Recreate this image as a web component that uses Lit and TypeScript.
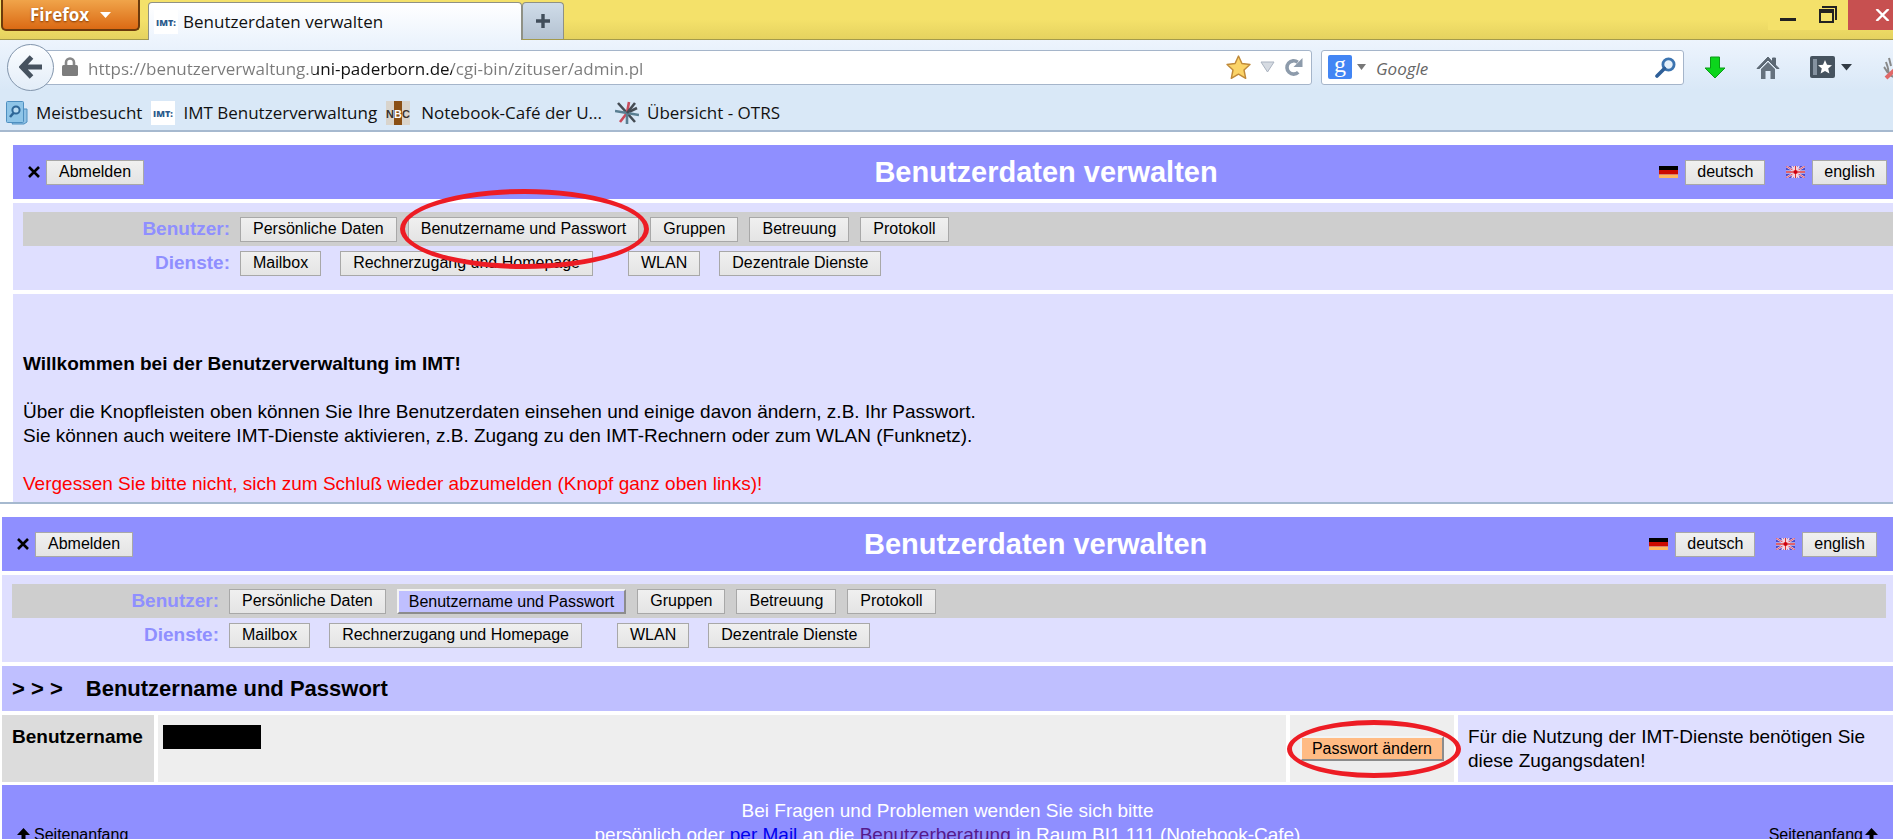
import { LitElement, html, css, svg, nothing } from "lit";
import { customElement, property } from "lit/decorators.js";

interface NavItem {
  label: string;
  gap?: "wide" | "far";
}

const USER_ITEMS: NavItem[] = [
  { label: "Persönliche Daten" },
  { label: "Benutzername und Passwort" },
  { label: "Gruppen" },
  { label: "Betreuung" },
  { label: "Protokoll" },
];

const SERVICE_ITEMS: NavItem[] = [
  { label: "Mailbox" },
  { label: "Rechnerzugang und Homepage", gap: "wide" },
  { label: "WLAN", gap: "far" },
  { label: "Dezentrale Dienste", gap: "wide" },
];

const buttonStyles = css`
  .btn {
    box-sizing: border-box;
    height: 25px;
    margin: 0;
    padding: 0 12px;
    border: 1px solid #a8a8a8;
    border-radius: 0;
    background: linear-gradient(#f0f0f0, #e4e4e4);
    color: #000;
    font: 16px/22px "Liberation Sans", Arial, sans-serif;
    white-space: nowrap;
  }
  .btn.active,
  .btn.action {
    border: 2px solid;
    border-color: #f4f4f4 #8c8c8c #8c8c8c #f4f4f4;
    padding: 0 10px;
    background: #bfbfff;
  }
  .btn.action {
    background: #ffbb84;
  }
  .marked {
    position: relative;
    display: inline-flex;
  }
  .ring {
    position: absolute;
    box-sizing: border-box;
    border: 5px solid #ed1c24;
    border-radius: 50%;
    pointer-events: none;
    z-index: 2;
  }
`;

/* Firefox window frame: title bar, toolbar and bookmarks */
@customElement("browser-chrome")
export class BrowserChrome extends LitElement {
  static styles = css`
    :host {
      display: block;
      font-family: "Open Sans", "Noto Sans", sans-serif;
      font-size: 17px;
      color: #111;
    }
    button {
      margin: 0;
      padding: 0;
      border: 0;
      background: none;
      font: inherit;
      color: inherit;
      display: flex;
      align-items: center;
      justify-content: center;
    }
    svg {
      display: block;
      flex: none;
    }
    .titlebar {
      display: flex;
      height: 39px;
      border-bottom: 1px solid #a39a4c;
      background: linear-gradient(#f4e16a 0 20px, #e5d25f);
    }
    .titlebar .menu {
      box-sizing: border-box;
      width: 139px;
      height: 31px;
      margin: 0 8px 0 1px;
      gap: 11px;
      border: 2px solid #6b3a0c;
      border-top: 0;
      border-radius: 0 0 5px 5px;
      background: linear-gradient(#f0a44a, #db6a14);
      color: #fff;
      font-weight: 700;
      text-shadow: 0 1px 2px #803800;
    }
    .tab {
      box-sizing: border-box;
      width: 374px;
      height: 38px;
      margin-top: 2px;
      padding-left: 5px;
      display: flex;
      align-items: center;
      gap: 5px;
      border: 1px solid #8f9185;
      border-bottom: 0;
      border-radius: 4px 4px 0 0;
      background: linear-gradient(#fff, #edf4fd);
    }
    .titlebar .newtab {
      box-sizing: border-box;
      width: 42px;
      height: 37px;
      margin-top: 2px;
      border: 1px solid #8f9185;
      border-bottom: 0;
      border-radius: 4px 4px 0 0;
      background: linear-gradient(#cfdce9, #b4c2d1);
    }
    .controls {
      margin-left: auto;
      display: flex;
      height: 30px;
      background: #f4e16a;
    }
    .titlebar .ctl {
      width: 40px;
      height: 30px;
    }
    .titlebar .close {
      width: 45px;
      overflow: hidden;
      justify-content: flex-end;
      padding-right: 3px;
      background: #c75050;
    }
    .tools {
      background: linear-gradient(#edf4fd, #d9e8f7 50px);
      border-bottom: 2px solid #a6b9cf;
    }
    .nav {
      display: flex;
      align-items: center;
      height: 54px;
      overflow: hidden;
    }
    .nav .back {
      box-sizing: border-box;
      width: 47px;
      height: 47px;
      margin: 0 -12px 0 7px;
      border: 1px solid #8295ac;
      border-radius: 50%;
      background: linear-gradient(#fbfdff, #e3edf8);
      position: relative;
      z-index: 1;
      flex: none;
    }
    .field {
      box-sizing: border-box;
      height: 35px;
      border: 1px solid #a5b5ca;
      border-radius: 3px;
      background: #fff;
      display: flex;
      align-items: center;
    }
    .urlbar {
      flex: 1;
      padding: 0 8px 0 19px;
    }
    .field input {
      flex: 1;
      min-width: 0;
      height: 30px;
      margin: 0;
      padding: 2px 0 0;
      border: 0;
      outline: 0;
      background: none;
      font: inherit;
    }
    .urlbar input {
      margin-left: 10px;
      color: transparent;
      background: linear-gradient(90deg, #7a7a7a 0 225px, #111 225px 364px, #7a7a7a 364px);
      -webkit-background-clip: text;
      background-clip: text;
    }
    .urlicons {
      display: flex;
      align-items: center;
      gap: 9px;
    }
    .search {
      width: 363px;
      margin-left: 9px;
      padding: 0 7px 0 6px;
      gap: 5px;
    }
    .search input {
      margin-left: 5px;
      font-style: italic;
    }
    .search input::placeholder {
      color: #666;
      opacity: 1;
    }
    .actions {
      display: flex;
      align-items: center;
      margin-left: 20px;
      gap: 30px;
      width: 189px;
      overflow: hidden;
    }
    .marks {
      box-sizing: border-box;
      display: flex;
      align-items: center;
      gap: 9px;
      height: 36px;
      padding: 2px 0 0 6px;
    }
    .marks a {
      display: flex;
      align-items: center;
      gap: 8px;
      color: inherit;
      text-decoration: none;
      white-space: nowrap;
    }
    .marks .spaced {
      gap: 11px;
      margin-right: 4px;
    }
  `;

  private imt() {
    return svg`<svg width="24" height="24" viewBox="0 0 24 24" aria-hidden="true">
      <rect width="24" height="24" fill="#fff"/>
      <text x="12" y="16" text-anchor="middle" font-family="Open Sans" font-size="9" font-weight="800" fill="#2b5a8c">IMT:</text>
    </svg>`;
  }

  render() {
    return html`
      <header class="titlebar">
        <button class="menu" type="button">
          Firefox
          <svg width="11" height="8" viewBox="0 0 11 8"><path d="M0 1h11L5.500 7z" fill="#fff" /></svg>
        </button>
        <div class="tab">${this.imt()}<span>Benutzerdaten verwalten</span></div>
        <button class="newtab" type="button" aria-label="Neuer Tab">
          <svg width="16" height="16" viewBox="0 0 16 16"><path d="M8 1v14M1 8h14" stroke="#414e5b" stroke-width="3.400" /></svg>
        </button>
        <div class="controls">
          <button class="ctl" type="button" aria-label="Minimieren">
            <svg width="16" height="24" viewBox="0 0 16 24"><path d="M0 15h16v3H0z" fill="#222" /></svg>
          </button>
          <button class="ctl" type="button" aria-label="Verkleinern">
            <svg width="18" height="18" viewBox="0 0 18 18">
              <path d="M3 0h15v14h-2V2H3z" fill="#222" />
              <path d="M0 3h15v14H0zM2 7v8h11V7z" fill="#222" fill-rule="evenodd" />
            </svg>
          </button>
          <button class="ctl close" type="button" aria-label="Schließen">
            <svg width="15" height="12" viewBox="0 0 15 12"><path d="M1.500 0l12 12M13.500 0l-12 12" stroke="#fff" stroke-width="2.400" /></svg>
          </button>
        </div>
      </header>
      <div class="tools">
        <div class="nav">
          <button class="back" type="button" aria-label="Zurück">
            <svg width="24" height="24" viewBox="0 0 24 24">
              <path d="M12.500 2L3 12l9.500 10M4 12h19" fill="none" stroke="#46525f" stroke-width="5" />
            </svg>
          </button>
          <div class="field urlbar">
            <svg width="16" height="20" viewBox="0 0 16 20">
              <path d="M4 9V5.500a4 4 0 018 0V9" fill="none" stroke="#888" stroke-width="2.600" />
              <rect y="8" width="16" height="11" rx="1.500" fill="#7d7d7d" />
            </svg>
            <input aria-label="Adresse" spellcheck="false" value="https://benutzerverwaltung.uni-paderborn.de/cgi-bin/zituser/admin.pl" />
            <div class="urlicons">
              <svg width="25" height="25" viewBox="0 0 24 24">
                <path d="M12 1l3.300 7.200 7.700.9-5.700 5.300 1.600 8-6.900-4-6.900 4 1.600-8L1 9.100l7.700-.9z" fill="#fbd468" stroke="#c08a3a" stroke-width="1.400" stroke-linejoin="round" />
              </svg>
              <svg width="15" height="12" viewBox="0 0 15 12"><path d="M1 1h13L7.500 11z" fill="#d6dbe2" stroke="#aab3c0" /></svg>
              <svg width="19" height="19" viewBox="0 0 18 18">
                <path d="M13.500 13.500A6.300 6.300 0 1113 4" fill="none" stroke="#8d9bab" stroke-width="3.400" />
                <path d="M17.500 0v8.500H9z" fill="#8d9bab" />
              </svg>
            </div>
          </div>
          <div class="field search">
            <svg width="24" height="24" viewBox="0 0 24 24">
              <rect width="24" height="24" rx="2" fill="#4285f4" />
              <text x="12" y="17" text-anchor="middle" font-family="Liberation Serif" font-size="24" fill="#fff">g</text>
            </svg>
            <svg width="9" height="6" viewBox="0 0 9 6"><path d="M0 0h9L4.500 6z" fill="#777" /></svg>
            <input aria-label="Suche" placeholder="Google" />
            <svg width="21" height="21" viewBox="0 0 21 21">
              <circle cx="13.500" cy="7.500" r="5.600" fill="#e6f1fb" stroke="#3c74b0" stroke-width="2.800" />
              <path d="M9.500 11.500L2 19" stroke="#2e5f98" stroke-width="3.600" stroke-linecap="round" />
            </svg>
          </div>
          <div class="actions">
            <svg width="22" height="23" viewBox="0 0 22 23"><path d="M6.500 1h9v11H21L11 22 1 12h5.500z" fill="#0cd51c" stroke="#0a9c16" /></svg>
            <svg width="24" height="23" viewBox="0 0 24 23">
              <path d="M12 1L1 12.500h2.500L12 4l8.500 8.500H23L19.500 9V2h-3v4z" fill="#5c6874" stroke="#5c6874" />
              <path d="M5 13l7-7 7 7v10h-4.500v-8h-5v8H5z" fill="#66727e" />
            </svg>
            <svg width="43" height="23" viewBox="0 0 43 23">
              <rect width="25" height="22" rx="2" fill="#46535f" />
              <path d="M3 3h4v16H3z" fill="#8592a0" />
              <path d="M15 4l2 4.800 5 .5-3.800 3.300 1.200 5-4.400-2.700-4.400 2.700 1.200-5L8 9.300l5-.5z" fill="#fff" />
              <path d="M31 8h11l-5.500 6.500z" fill="#323b44" />
            </svg>
            <svg width="24" height="26" viewBox="0 0 24 26">
              <path d="M5 19C3 16 2 14 1 13M5 14L3 8M8 12L6 4M11 11L11 2M14 11l3-7M5 14c0 6 3 9 8 9" fill="none" stroke="#888" stroke-width="2" />
              <path d="M3 24L20 8" stroke="#e06868" stroke-width="4" />
            </svg>
          </div>
        </div>
        <nav class="marks">
          <a href="#">
            <svg width="22" height="24" viewBox="0 0 22 24">
              <path d="M14 8h7v13l-3 2H6z" fill="#8fc1e4" stroke="#4e8fc0" />
              <rect x=".5" y=".5" width="17" height="21" rx="1" fill="#8ec5e8" stroke="#4e8fc0" />
              <circle cx="10" cy="9" r="3.600" fill="#b9dcf2" stroke="#2e6798" stroke-width="2" />
              <path d="M7.500 12L4 16" stroke="#2e6798" stroke-width="2.600" />
            </svg>
            Meistbesucht
          </a>
          <a href="#">${this.imt()}IMT Benutzerverwaltung</a>
          <a class="spaced" href="#">
            <svg width="24" height="24" viewBox="0 0 24 24">
              <rect width="24" height="24" fill="#d9d4cc" />
              <rect x="8" width="8" height="24" fill="#8a4f14" />
              <text x="12" y="17" text-anchor="middle" font-family="Liberation Sans" font-size="11" font-weight="700" fill="#3a322c">N<tspan fill="#fff">B</tspan>C</text>
            </svg>
            Notebook-Café der U...
          </a>
          <a href="#">
            <svg width="24" height="24" viewBox="0 0 24 24" fill="none" stroke-width="2.600">
              <path d="M3 2l9 10 10-5M12 12l8 9" stroke="#454c54" />
              <path d="M14 1l-2 11-7 9" stroke="#c84a5a" />
              <path d="M0 10l12 2 12 2M12 12v11" stroke="#5a7f92" />
              <path d="M20 2l-8 10" stroke="#454c54" />
            </svg>
            Übersicht - OTRS
          </a>
        </nav>
      </div>
    `;
  }
}

/* Banner and the two button rows shared by every page of the application */
@customElement("app-head")
export class AppHead extends LitElement {
  @property() active = "";
  @property() marked = "";

  static styles = [
    buttonStyles,
    css`
      :host {
        display: block;
        font-family: "Liberation Sans", Arial, sans-serif;
      }
      .banner {
        display: grid;
        grid-template-columns: 22.4% 1fr auto;
        align-items: center;
        height: 54px;
        margin-bottom: 4px;
        padding-right: var(--banner-end, 16px);
        background: #8f8fff;
      }
      .logout {
        display: flex;
        align-items: center;
        gap: 6px;
        padding-left: 15px;
      }
      h1 {
        margin: 0;
        text-align: center;
        font-size: 29px;
        line-height: 34px;
        color: #fff;
      }
      .langs {
        display: flex;
        align-items: center;
      }
      .langs .btn {
        padding: 0 11px;
      }
      .langs svg {
        margin-right: 7px;
      }
      .langs button + svg {
        margin-left: 21px;
      }
      .menu {
        padding: 9px var(--row-end, 7px) 10px 10px;
        background: #dfdfff;
      }
      .row {
        display: flex;
        align-items: center;
        height: 34px;
      }
      .row.user {
        background: #cecece;
      }
      .label {
        width: 207px;
        margin-right: 10px;
        text-align: right;
        font-size: 19px;
        font-weight: 700;
        color: #8f8fff;
      }
      .items {
        display: flex;
        align-items: center;
        gap: 11px;
      }
      .wide {
        margin-left: 8px;
      }
      .far {
        margin-left: 24px;
      }
      .ring {
        inset: -28px -10px -27px -8px;
      }
    `,
  ];

  private item(it: NavItem) {
    return html`<span class="marked ${it.gap ?? ""}"
      ><button type="button" class="btn ${it.label === this.active ? "active" : ""}">${it.label}</button>${it.label === this.marked
        ? html`<span class="ring"></span>`
        : nothing}</span
    >`;
  }

  render() {
    return html`
      <header class="banner">
        <div class="logout">
          <svg width="12" height="12" viewBox="0 0 12 12"><path d="M1 1l10 10M11 1L1 11" stroke="#000" stroke-width="2.600" /></svg>
          <button type="button" class="btn">Abmelden</button>
        </div>
        <h1>Benutzerdaten verwalten</h1>
        <div class="langs">
          <svg width="19" height="12" viewBox="0 0 19 12">
            <path d="M0 0h19v4H0z" fill="#000" />
            <path d="M0 4h19v4.500H0z" fill="#cc0a00" />
            <path d="M0 8.500h19V12H0z" fill="#ffb85c" />
          </svg>
          <button type="button" class="btn">deutsch</button>
          <svg width="19" height="12" viewBox="0 0 19 12">
            <path d="M0 0h19v12H0z" fill="#4a4acc" />
            <path d="M0 0l19 12M19 0L0 12M6 0l7 12M13 0L6 12" stroke="#f3d3e4" stroke-width="2" />
            <path d="M0 0l19 12M19 0L0 12" stroke="#e05a6a" />
            <path d="M9.500 0v12M0 6h19" stroke="#fff" stroke-width="3" />
            <path d="M9.500 0v12M0 6h19" stroke="#d8303c" stroke-width="1.400" />
            <circle cx="9.500" cy="6" r="2" fill="#d00010" />
          </svg>
          <button type="button" class="btn">english</button>
        </div>
      </header>
      <nav class="menu">
        <div class="row user">
          <span class="label">Benutzer:</span>
          <div class="items">${USER_ITEMS.map((i) => this.item(i))}</div>
        </div>
        <div class="row">
          <span class="label">Dienste:</span>
          <div class="items">${SERVICE_ITEMS.map((i) => this.item(i))}</div>
        </div>
      </nav>
    `;
  }
}

@customElement("app-root")
export class AppRoot extends LitElement {
  static styles = [
    buttonStyles,
    css`
      :host {
        display: block;
        height: 100vh;
        overflow: hidden;
        background: #fff;
        color: #000;
        font: 19px/24px "Liberation Sans", Arial, sans-serif;
      }
      .first {
        padding: 13px 0 0 13px;
        border-bottom: 2px solid #a6b9cf;
      }
      .first app-head {
        --banner-end: 6px;
        --row-end: 0px;
      }
      .welcome {
        margin-top: 4px;
        padding: 58px 10px 6px;
        background: #dfdfff;
      }
      h2,
      h3,
      p {
        margin: 0 0 24px;
        font-size: 19px;
        line-height: 24px;
      }
      .warn {
        margin: 0;
        color: #f00;
      }
      .second {
        padding: 13px 0 0 2px;
      }
      h2.crumb {
        display: flex;
        gap: 23px;
        align-items: center;
        height: 45px;
        margin: 4px 0;
        padding-left: 10px;
        background: #bfbfff;
        font-size: 22px;
      }
      table {
        width: 100%;
        border-collapse: collapse;
      }
      th,
      td {
        height: 49px;
        padding: 10px 10px 8px;
        vertical-align: top;
        text-align: left;
        background: #eee;
        border-left: 4px solid #fff;
      }
      th {
        width: 132px;
        border-left: 0;
        background: #dcdcdc;
      }
      td.value {
        padding: 10px 5px 8px;
      }
      td.act {
        width: 141px;
        padding: 9px 10px;
        vertical-align: middle;
      }
      td.hint {
        width: 415px;
        background: #dfdfff;
      }
      .redacted {
        width: 98px;
        height: 24px;
        background: #000;
      }
      .act .ring {
        inset: -16px -17px -17px -13px;
      }
      footer {
        display: grid;
        grid-template-columns: 1fr auto 1fr;
        align-items: end;
        margin-top: 3px;
        padding: 14px 15px 13px;
        background: #8f8fff;
        color: #fff;
        text-align: center;
      }
      .top {
        display: flex;
        align-items: center;
        gap: 4px;
        font-size: 16px;
        color: #000;
        text-decoration: none;
      }
      .top.end {
        gap: 2px;
        justify-content: flex-end;
      }
      .mail {
        color: #00e;
      }
      .visited {
        color: #551a8b;
      }
    `,
  ];

  private arrow() {
    return svg`<svg width="13" height="15" viewBox="0 0 13 15"><path d="M6.500 0L13 7H8.500v8h-4V7H0z" fill="#000"/></svg>`;
  }

  render() {
    return html`
      <browser-chrome></browser-chrome>
      <section class="first">
        <app-head marked="Benutzername und Passwort"></app-head>
        <main class="welcome">
          <h3>Willkommen bei der Benutzerverwaltung im IMT!</h3>
          <p>
            Über die Knopfleisten oben können Sie Ihre Benutzerdaten einsehen und einige davon ändern, z.B. Ihr Passwort.<br />
            Sie können auch weitere IMT-Dienste aktivieren, z.B. Zugang zu den IMT-Rechnern oder zum WLAN (Funknetz).
          </p>
          <p class="warn">Vergessen Sie bitte nicht, sich zum Schluß wieder abzumelden (Knopf ganz oben links)!</p>
        </main>
      </section>
      <section class="second">
        <app-head active="Benutzername und Passwort"></app-head>
        <h2 class="crumb"><span>&gt; &gt; &gt;</span><span>Benutzername und Passwort</span></h2>
        <table>
          <tr>
            <th scope="row">Benutzername</th>
            <td class="value"><div class="redacted"></div></td>
            <td class="act">
              <span class="marked"><button type="button" class="btn action">Passwort ändern</button><span class="ring"></span></span>
            </td>
            <td class="hint">Für die Nutzung der IMT-Dienste benötigen Sie diese Zugangsdaten!</td>
          </tr>
        </table>
        <footer>
          <a class="top" href="#">${this.arrow()}Seitenanfang</a>
          <div>
            Bei Fragen und Problemen wenden Sie sich bitte<br />
            persönlich oder <a class="mail" href="#">per Mail</a> an die <a class="visited" href="#">Benutzerberatung</a> in Raum BI1 111 (Notebook-Cafe)
          </div>
          <a class="top end" href="#">Seitenanfang${this.arrow()}</a>
        </footer>
      </section>
    `;
  }
}
